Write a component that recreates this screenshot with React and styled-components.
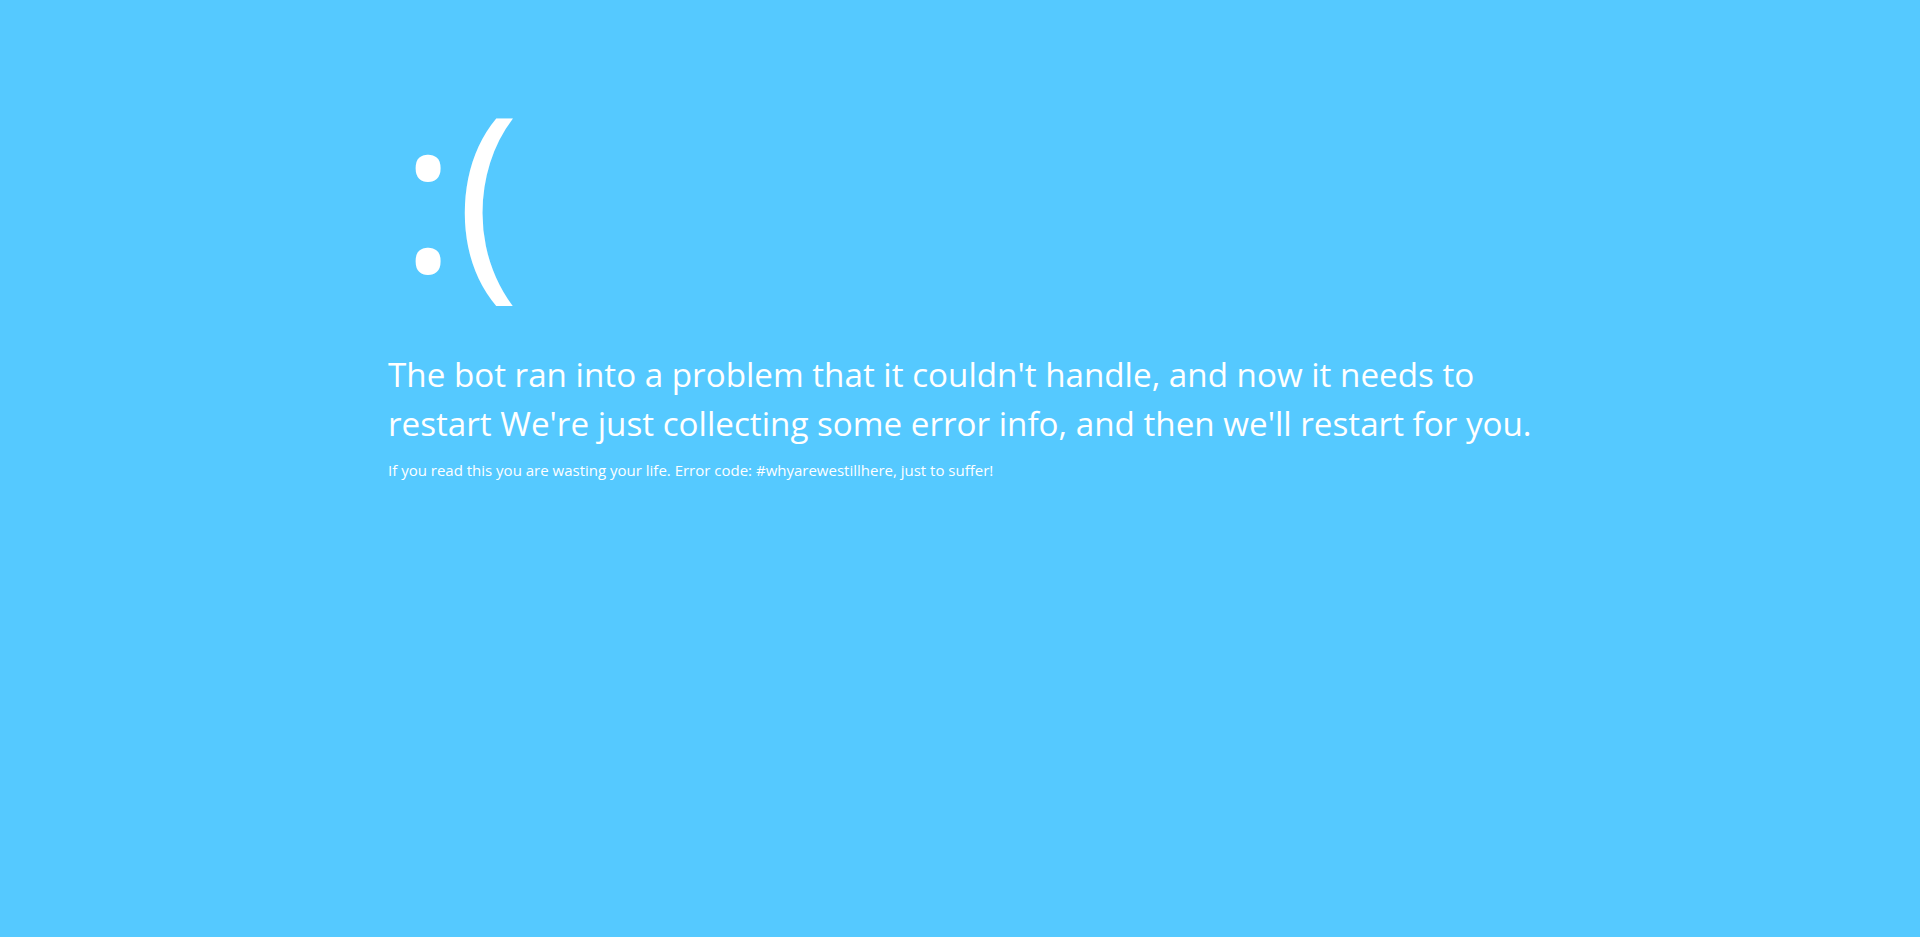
import React from 'react'
import styled, { createGlobalStyle } from 'styled-components'

const Global = createGlobalStyle`
  html, body {
    margin: 0;
    padding: 0;
    background: #55c9ff;
  }
  body {
    font-family: "Open Sans", "Noto Sans", sans-serif;
    color: #fff;
  }
`;

function App () {
  return (
    <Screen>
      <Global/>
      <Content>
        <Face>:(</Face>
        <Message>
          The bot ran into a problem that it couldn't handle, and now it needs to<br/>
          restart We're just collecting some error info, and then we'll restart for you.
        </Message>
        <Detail>If you read this you are wasting your life. Error code: #whyarewestillhere, just to suffer!</Detail>
      </Content>
    </Screen>
  )
}

const Screen = styled.main`
  min-height: 937px;
  background: #55c9ff;
  box-sizing: border-box;
  padding: 82px 0 0 20%;
`;
const Content = styled.div`
  display: flex;
  flex-direction: column;
  align-items: flex-start;
  margin-left: 4px;
`;
const Face = styled.div`
  font-size: 214px;
  line-height: 1;
  margin-left: 12px;
  font-weight: 400;
`;
const Message = styled.p`
  font-size: 33.2px;
  line-height: 49px;
  font-weight: 400;
  margin: 54px 0 0 0;
  white-space: nowrap;
`;
const Detail = styled.p`
  font-size: 15px;
  margin: 12px 0 0 0;
  white-space: nowrap;
`;

export default App;
